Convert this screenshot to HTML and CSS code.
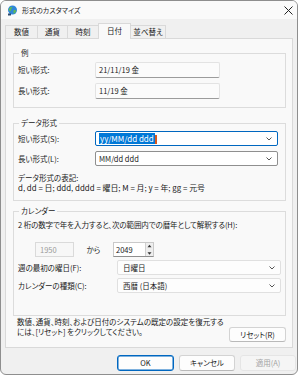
FILE: index.html
```html
<!DOCTYPE html>
<html lang="ja">
<head>
    <meta charset="UTF-8">
    <title>形式のカスタマイズ</title>
    <link rel="stylesheet" href="styles.css">
</head>
<body>
    <div class="window">
        <div class="titlebar">
            <svg class="app-icon" width="11" height="11" viewBox="0 0 11 11">
                <circle cx="5.5" cy="5" r="4.5" fill="#2f86d8"/>
                <path d="M2.2 3.2 C3.2 2 4.6 1.8 5.4 2.6 C5 3.6 4 3.8 4.2 4.8 C4.4 5.8 3.4 6.4 2.6 6 C1.6 5.4 1.6 4 2.2 3.2 Z" fill="#5cb85c"/>
                <path d="M6.6 5.2 C7.6 4.8 8.8 5.2 9.2 6 C8.8 7.4 7.6 8.6 6.6 8.8 C6.8 7.6 6 6 6.6 5.2 Z" fill="#5cb85c"/>
                <rect x="1" y="8.5" width="3" height="2" fill="#2b4a6f"/>
            </svg>
            <span class="title">形式のカスタマイズ</span>
            <svg class="close" width="9" height="9" viewBox="0 0 9 9">
                <path d="M0.5 0.5 L8.5 8.5 M8.5 0.5 L0.5 8.5" stroke="#222" stroke-width="1" fill="none"/>
            </svg>
        </div>

        <div class="content">
            <div class="tabs">
                <div class="tab tab-num">数値</div>
                <div class="tab tab-cur">通貨</div>
                <div class="tab tab-time">時刻</div>
                <div class="tab tab-date active">日付</div>
                <div class="tab tab-sort">並べ替え</div>
            </div>

            <div class="panel">
                <div class="group group-example">
                    <div class="group-title">例</div>
                    <div class="row first">
                        <span class="label">短い形式:</span>
                        <div class="readonly">21/11/19 金</div>
                    </div>
                    <div class="row">
                        <span class="label">長い形式:</span>
                        <div class="readonly">11/19 金</div>
                    </div>
                </div>

                <div class="group group-format">
                    <div class="group-title">データ形式</div>
                    <div class="row first">
                        <span class="label">短い形式(S):</span>
                        <div class="combo edit focused">
                            <span class="value"><span class="selection">yy/MM/dd ddd</span><span class="caret"></span></span>
                            <svg class="chevron" width="6" height="4" viewBox="0 0 6 4"><path d="M0.5 0.5 L3 3 L5.5 0.5" stroke="#555" fill="none"/></svg>
                        </div>
                    </div>
                    <div class="row">
                        <span class="label">長い形式(L):</span>
                        <div class="combo edit">
                            <span class="value">MM/dd ddd</span>
                            <svg class="chevron" width="6" height="4" viewBox="0 0 6 4"><path d="M0.5 0.5 L3 3 L5.5 0.5" stroke="#555" fill="none"/></svg>
                        </div>
                    </div>
                    <div class="notation">
                        データ形式の表記:<br>
                        <span class="notation-codes">d, dd = 日; ddd, dddd = 曜日; M = 月; y = 年; gg = 元号</span>
                    </div>
                </div>

                <div class="group group-calendar">
                    <div class="group-title">カレンダー</div>
                    <div class="hint">2 桁の数字で年を入力すると、次の範囲内での暦年として解釈する(H):</div>
                    <div class="year-row">
                        <div class="year-from">1950</div>
                        <span class="kara">から</span>
                        <div class="year-to">
                            <span class="value">2049</span>
                            <div class="spin">
                                <svg width="7" height="6" viewBox="0 0 7 6"><path d="M1.5 4 L3.5 1.5 L5.5 4 Z" fill="#333"/></svg>
                                <svg width="7" height="6" viewBox="0 0 7 6"><path d="M1.5 2 L3.5 4.5 L5.5 2 Z" fill="#333"/></svg>
                            </div>
                        </div>
                    </div>
                    <div class="row cal-row">
                        <span class="label wide">週の最初の曜日(F):</span>
                        <div class="combo list">
                            <span class="value">日曜日</span>
                            <svg class="chevron" width="6" height="4" viewBox="0 0 6 4"><path d="M0.5 0.5 L3 3 L5.5 0.5" stroke="#555" fill="none"/></svg>
                        </div>
                    </div>
                    <div class="row cal-row">
                        <span class="label wide">カレンダーの種類(C):</span>
                        <div class="combo list">
                            <span class="value">西暦 (日本語)</span>
                            <svg class="chevron" width="6" height="4" viewBox="0 0 6 4"><path d="M0.5 0.5 L3 3 L5.5 0.5" stroke="#555" fill="none"/></svg>
                        </div>
                    </div>
                </div>

                <div class="reset-row">
                    <p class="reset-text">数値、通貨、時刻、および日付のシステムの既定の設定を復元する<br>には、[リセット] をクリックしてください。</p>
                    <div class="btn reset">リセット(R)</div>
                </div>
            </div>

            <div class="buttons">
                <div class="btn default">OK</div>
                <div class="btn">キャンセル</div>
                <div class="btn disabled">適用(A)</div>
            </div>
        </div>
    </div>
</body>
</html>
```

FILE: styles.css
```css
* {
    margin: 0;
    padding: 0;
    box-sizing: border-box;
}

body {
    font-family: "Noto Sans CJK JP", "Noto Sans", sans-serif;
    font-feature-settings: "palt";
    font-size: 7.5px;
    line-height: 10px;
    color: #1a1a1a;
    background: #ffffff;
}

.window {
    width: 298px;
    height: 375px;
    border: 1px solid #8e8e8e;
    border-radius: 6px;
    background: #f0f0f0;
    overflow: hidden;
}

/* title bar */
.titlebar {
    height: 18px;
    background: #fafafa;
    display: flex;
    align-items: center;
    padding-left: 6px;
}

.title {
    margin-left: 4px;
    flex: 1;
    font-size: 7px;
}

.close {
    margin-right: 4px;
}

.content {
    padding: 4px 4px 0 4px;
}

/* tabs */
.tabs {
    display: flex;
    align-items: flex-end;
    height: 15px;
}

.tab {
    height: 13px;
    border: 1px solid #d9d9d9;
    border-bottom: none;
    margin-right: -1px;
    background: #f0f0f0;
    text-align: center;
    line-height: 12px;
}

.tab-num { width: 33px; }
.tab-cur { width: 31px; }
.tab-time { width: 32px; }
.tab-date { width: 33px; }
.tab-sort { width: 36px; }

.tab.active {
    height: 16px;
    margin-bottom: -1px;
    background: #f9f9f9;
    position: relative;
    line-height: 14px;
}

/* tab page */
.panel {
    width: 288px;
    height: 310px;
    border: 1px solid #d9d9d9;
    background: #f9f9f9;
}

.group {
    margin: 0 6px 0 7px;
    border: 1px solid #dcdcdc;
    padding: 0 4px;
}

.group-title {
    margin: -6px 0 0 1px;
    padding: 0 2px;
    width: fit-content;
    background: #f9f9f9;
    line-height: 10px;
}

.group-example {
    margin-top: 14px;
    padding-bottom: 8px;
}

.group-format {
    margin-top: 15px;
    padding-bottom: 7px;
}

.group-calendar {
    margin-top: 10px;
    padding-bottom: 22px;
}

.row {
    display: flex;
    align-items: center;
    margin-top: 5px;
}

.row.first {
    margin-top: 4px;
}

.group-format .row.first {
    margin-top: 3px;
}

.label {
    width: 77px;
    flex-shrink: 0;
}

.label.wide {
    width: 99px;
}

.readonly {
    width: 125px;
    height: 16px;
    background: #fbfbfb;
    border: 1px solid #e3e3e3;
    border-bottom-color: #9c9c9c;
    border-radius: 2px;
    padding-left: 3px;
    line-height: 14px;
}

.combo {
    display: flex;
    align-items: center;
    justify-content: space-between;
    height: 15px;
    padding: 0 5px 0 2px;
    border-radius: 2px;
}

.combo.edit {
    width: 183px;
    background: #ffffff;
    border: 1px solid #8f8f8f;
}

.combo.edit .value {
    padding-left: 1px;
}

.combo.focused {
    border-color: #0067c0;
}

.selection {
    background: #0078d7;
    color: #ffffff;
    padding: 0 1px;
    display: inline-block;
    line-height: 11px;
    font-size: 8px;
}

.caret {
    display: inline-block;
    width: 2px;
    height: 9px;
    background: #d8581c;
    vertical-align: middle;
}

.combo.list {
    width: 164px;
    background: #fdfdfd;
    border: 1px solid #e0e0e0;
    padding-left: 5px;
}

.notation {
    margin-top: 7px;
}

.notation-codes {
    font-size: 7.9px;
}

/* calendar */
.hint {
    margin-top: 4px;
    white-space: nowrap;
    letter-spacing: -0.1px;
}

.year-row {
    display: flex;
    align-items: center;
    margin-top: 12px;
    padding-left: 17px;
}

.year-from {
    width: 39px;
    height: 15px;
    border: 1px solid #dadada;
    background: #f7f7f7;
    color: #9a9a9a;
    padding-left: 4px;
    line-height: 13px;
}

.kara {
    width: 39px;
    text-align: center;
}

.year-to {
    width: 41px;
    height: 15px;
    display: flex;
    justify-content: space-between;
    border: 1px solid #c9c9c9;
    border-bottom-color: #8f8f8f;
    background: #ffffff;
    padding-left: 2px;
    line-height: 13px;
}

.spin {
    display: flex;
    flex-direction: column;
    width: 8px;
    background: #eeeeee;
    border-left: 1px solid #d0d0d0;
}

.spin svg {
    display: block;
    height: 6.5px;
}

.cal-row {
    margin-top: 3px;
}

/* reset area */
.reset-row {
    display: flex;
    justify-content: space-between;
    margin-top: 1px;
    padding: 0 6px 0 11px;
}

.reset-text {
    white-space: nowrap;
}

.btn {
    height: 16px;
    background: #fdfdfd;
    border: 1px solid #d3d3d3;
    border-bottom-color: #b9b9b9;
    border-radius: 3px;
    text-align: center;
    line-height: 14px;
}

.btn.reset {
    width: 57px;
    height: 15px;
    margin-top: 10px;
    line-height: 13px;
}

.buttons {
    display: flex;
    justify-content: flex-end;
    gap: 5px;
    margin: 7px -3px 0 0;
}

.buttons .btn {
    width: 56px;
}

.buttons .btn.default {
    width: 57px;
    border: 1px solid #0067c0;
    box-shadow: inset 0 0 0 0.5px #0067c0;
}

.btn.disabled {
    background: #f5f5f5;
    border-color: #e5e5e5;
    color: #a3a3a3;
}
```
